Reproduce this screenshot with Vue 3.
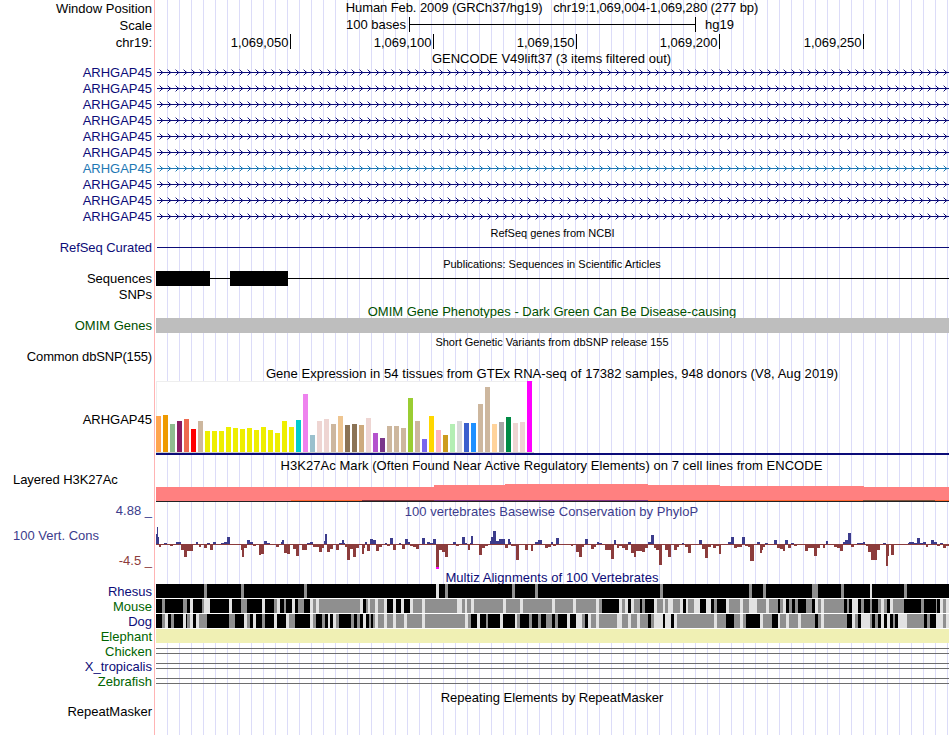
<script setup>
const WIDTH = 793

// ruler
const ticks = [
  { x: 134, label: '1,069,050' },
  { x: 277, label: '1,069,100' },
  { x: 420, label: '1,069,150' },
  { x: 563, label: '1,069,200' },
  { x: 707, label: '1,069,250' },
]

// GENCODE transcripts, the 7th is a non-coding one
const genes = Array.from({ length: 10 }, (_, i) => ({ name: 'ARHGAP45', alt: i === 6 }))

// GTEx: height and color of each tissue
const tissues = `36 ffa54f,37 ee9a00,28 8fbc8f,31 8b1c62,33 ee6a50,23 ff0000,31 cdb79e,21 eeee00,21 eeee00,
21 eeee00,25 eeee00,24 eeee00,23 eeee00,24 eeee00,22 eeee00,25 eeee00,22 eeee00,19 eeee00,31 eeee00,25 eeee00,
32 00cdcd,58 ee82ee,17 9ac0cd,31 eed5d2,33 eed5d2,28 cdb79e,36 eec591,27 8b7355,28 8b7355,27 cdaa7d,34 eed5d2,
19 b452cd,14 7a378b,26 cdb79e,26 cdb79e,24 cdb79e,54 9acd32,31 cdb79e,13 7a67ee,36 ffd700,22 ffb6c1,17 cd9b1d,
28 b4eeb4,31 d9d9d9,29 3a5fcd,29 1e90ff,48 cdb79e,65 cdb79e,28 ffd39b,30 a6a6a6,35 008b45,29 eed5d2,30 eed5d2,
71 ff00ff`
  .split(',')
  .map((s, i) => {
    const [h, color] = s.trim().split(' ')
    return { x: i * 7, h: Number(h), color: '#' + color }
  })

// H3K27Ac signal steps and the thin overlay at the bottom
const signal = [
  [0, 278, 14], [278, 349, 16], [349, 492, 17], [492, 564, 16], [564, 708, 15], [708, 793, 14],
]
const overlay = [
  [135, 206, '#ff6633'], [206, 278, '#803038'], [278, 492, '#803080'],
  [492, 707, '#ff6633'], [707, 779, '#805038'], [779, 793, '#ff6633'],
]

// PhyloP: "start end height", negative goes below the axis
const cons = `0 1 10,1 2 17,2 3 7,3 5 -3,8 11 1,14 17 -2,20 25 2,25 28 -6,28 31 -13,31 37 -7,40 42 2,43 45 -3,
48 51 -4,51 54 1,54 57 -6,57 60 2,65 68 1,68 71 2,71 74 7,85 86 -6,86 88 -13,88 91 -4,91 94 4,94 97 2,97 100 -2,
103 105 -11,105 108 -10,108 111 3,111 114 1,120 123 -3,125 126 2,126 128 4,128 131 -9,131 134 -10,137 140 -5,
140 143 -12,146 151 -6,151 154 1,154 157 2,157 163 -3,163 166 -8,166 168 -4,168 169 3,169 171 10,171 174 -8,
174 177 -5,180 183 -6,183 186 1,186 188 4,188 189 1,189 191 -3,191 194 -16,194 197 -5,197 200 -13,200 203 -4,
206 208 -10,208 209 -4,209 211 2,211 214 -7,214 217 5,217 220 4,220 223 -7,223 226 -3,229 231 1,231 234 -2,
234 237 6,237 240 -6,243 245 1,246 249 -5,249 252 5,252 254 2,254 257 -2,257 260 -3,260 263 -5,266 269 6,
271 274 2,274 277 1,277 280 5,280 283 -25,283 286 -6,286 289 -8,289 292 -13,297 300 2,300 303 -2,306 309 7,
309 311 1,312 314 -6,314 315 1,315 317 8,323 326 -11,326 329 -4,329 332 -2,334 335 3,335 337 7,337 340 13,
340 343 3,343 349 5,349 352 -4,352 354 5,354 355 2,355 360 -2,360 363 -16,369 372 -6,375 377 -7,379 382 2,
382 386 4,389 392 -4,392 395 -3,395 397 2,397 400 -2,400 403 6,415 417 -2,420 423 -8,423 426 -13,426 428 -3,
429 432 5,435 438 -5,438 440 -3,441 443 2,443 446 1,449 455 -6,455 458 -15,458 460 4,461 463 -4,463 466 -2,
466 469 -4,469 472 -6,472 475 2,475 478 -9,478 480 -13,480 486 -7,486 489 -8,489 492 -4,492 495 2,495 498 9,
498 500 -4,500 503 -6,503 506 -21,509 512 -6,512 515 -13,518 521 -6,521 523 -3,526 528 1,529 532 -3,532 535 -9,
543 546 4,546 549 -5,549 552 -14,552 555 -3,557 560 -4,560 563 -2,563 565 -10,572 575 2,575 578 7,578 581 -4,
581 586 -3,586 589 7,589 592 -2,592 594 -3,594 598 -17,601 604 2,604 606 -9,606 607 -6,607 609 -3,609 612 1,
618 621 4,621 624 -4,624 627 -5,627 629 -7,629 632 4,632 635 -4,635 638 1,638 641 -2,649 652 -7,652 658 -4,
658 661 -12,661 664 -4,667 669 -4,670 672 3,678 681 -3,681 684 -4,684 687 -7,687 689 2,689 692 4,692 695 11,
695 698 -3,701 707 1,707 709 2,710 712 -2,712 715 -8,715 721 -16,721 724 -6,727 730 1,730 732 -22,732 733 -12,
735 738 -11,752 753 1,753 758 2,758 761 1,761 764 6,764 767 1,767 770 2,770 772 -3,772 775 -1,775 778 4,
778 781 2,781 784 -2,784 787 1,787 790 -4,790 793 -2`
  .split(',')
  .map((s) => s.trim().split(' ').map(Number))

// Multiz: letter is the shade, number is where it starts (k black, g gray, w light)
const shades = { k: '#000', g: '#8f8f8f', w: '#e2e2e2' }
const toRuns = (s) => {
  const parts = s.trim().split(/\s+/)
  return parts.map((p, i) => {
    const x = Number(p.slice(1))
    const end = i + 1 < parts.length ? Number(parts[i + 1].slice(1)) : WIDTH
    return { x, w: end - x, fill: shades[p[0]] }
  })
}
const aligned = [
  {
    name: 'Rhesus',
    color: 'navy',
    runs: toRuns(`k0 g48 k51 g85 k88 g148 k151 w280 k283 g289 k292 g356 k359 g379 k382 g504 k507 g593 k596 g607
      k610 g656 k662 g685 k688 w714 k716 g748 k751`),
  },
  {
    name: 'Mouse',
    color: 'green',
    runs: toRuns(`k0 g6 k9 g27 k31 w34 k37 g46 w48 k54 w73 k76 g85 k91 w106 k109 g118 w121 k124 g128 k130 w136
      k139 g142 k148 w154 g157 w160 g163 w204 k207 g210 w212 g214 w219 g222 w228 k231 w237 k240 w245 k248 w254
      g257 w266 g269 w301 g306 w309 g311 w315 g318 w347 g350 w364 g367 w396 g399 w417 g420 w440 g443 k446 w463
      g466 w469 k472 w475 g478 k484 g486 k489 w498 g501 w507 g509 w512 g517 w524 k527 w530 g532 w538 k544 w550
      k555 g558 k561 w570 g573 w584 g587 w593 g601 w610 g613 k622 g624 w627 k630 g633 k636 g639 k642 g650 k656
      w659 g662 w665 g668 k688 g691 k693 w696 k702 g705 k708 g714 k716 g722 w725 g728 k731 w734 g737 k748 g765
      k768 g780 k781 w784 g787 w790`),
  },
  {
    name: 'Dog',
    color: 'navy',
    runs: toRuns(`k0 g6 w9 k12 g15 k18 w27 k30 g31 w34 k37 w40 g43 k51 g73 k79 w88 g91 k94 w97 k100 g106 k109
      w118 k121 w130 g133 k139 w154 g157 k160 g166 k169 w172 k174 w177 g180 k183 g195 k198 g201 k204 w207 k210
      g213 k215 g217 w219 g222 w228 g231 w237 g240 w248 g251 w266 g269 w309 g312 k315 w321 k324 g330 k332 w344
      k347 w359 g361 k364 g373 k376 g382 k385 g390 k396 g399 k402 w411 k414 w420 g426 k429 w432 g435 w440 g443
      w461 g466 w472 g475 w481 g484 k492 g495 w498 k507 w509 k515 w518 g521 w558 g561 k570 g578 w584 g587 k590
      w604 g607 k616 w622 g624 w630 g633 w642 g645 k659 g662 w665 g668 k691 w696 g699 k702 w705 g714 k716 g719
      k722 w725 k728 w731 k734 g737 k739 w742 g751 k768 g771 k774 w780 g787 w790`),
  },
]
const unaligned = [
  { name: 'Chicken', color: 'green' },
  { name: 'X_tropicalis', color: 'navy' },
  { name: 'Zebrafish', color: 'green' },
]
</script>

<template>
  <div class="browser">
    <div class="row head">
      <span class="label">Window Position</span>
      <div class="title position">Human Feb. 2009 (GRCh37/hg19) &nbsp; chr19:1,069,004-1,069,280 (277 bp)</div>
    </div>
    <div class="row head">
      <span class="label">Scale</span>
      <svg class="plot" width="793" height="17">
        <text x="250" y="12" text-anchor="end">100 bases</text>
        <path d="M253 0h1v15h-1zM254 7h285v1h-285zM539 0h1v15h-1z" />
        <text x="549" y="12">hg19</text>
      </svg>
    </div>
    <div class="row head">
      <span class="label">chr19:</span>
      <svg class="plot" width="793" height="17">
        <g v-for="t in ticks" :key="t.x">
          <text :x="t.x - 1.5" y="13" text-anchor="end">{{ t.label }}</text>
          <rect :x="t.x" y="0" width="1" height="15" />
        </g>
      </svg>
    </div>

    <div class="title gencode">GENCODE V49lift37 (3 items filtered out)</div>
    <div v-for="(g, i) in genes" :key="i" class="row" :class="g.alt ? 'blue' : 'navy'">
      <span class="label">{{ g.name }}</span>
      <svg class="plot" width="793" height="16">
        <defs>
          <pattern :id="'arrow' + i" x="3" y="0" width="8" height="16" patternUnits="userSpaceOnUse">
            <path d="M0 4h1v1h-1zM0 10h1v1h-1z" opacity="0.4" />
            <path d="M1 5h1v1h-1zM2 6h1v1h-1zM2 8h1v1h-1zM1 9h1v1h-1z" />
            <path d="M3 6h1v1h-1zM3 8h1v1h-1z" opacity="0.25" />
          </pattern>
        </defs>
        <rect x="1" y="7" width="792" height="1" />
        <rect x="1" y="0" width="792" height="16" :fill="`url(#arrow${i})`" />
      </svg>
    </div>

    <div class="title small refseq">RefSeq genes from NCBI</div>
    <div class="row navy">
      <span class="label refseq-label">RefSeq Curated</span>
      <svg class="plot" width="793" height="16"><rect x="1" y="7" width="792" height="1" /></svg>
    </div>

    <div class="title small pubs">Publications: Sequences in Scientific Articles</div>
    <div class="row">
      <span class="label">Sequences</span>
      <svg class="plot" width="793" height="16">
        <path d="M0 0h54v15h-54zM74 0h58v15h-58zM54 7h739v1h-739z" />
      </svg>
    </div>
    <div class="row"><span class="label">SNPs</span></div>

    <div class="title omim">OMIM Gene Phenotypes - Dark Green Can Be Disease-causing</div>
    <div class="row omim-row">
      <span class="label">OMIM Genes</span>
      <div class="gray-bar"></div>
    </div>

    <div class="title small dbsnp">Short Genetic Variants from dbSNP release 155</div>
    <div class="row"><span class="label dbsnp-label">Common dbSNP(155)</span></div>

    <div class="title gtex">Gene Expression in 54 tissues from GTEx RNA-seq of 17382 samples, 948 donors (V8, Aug 2019)</div>
    <div class="row gtex-row">
      <span class="label">ARHGAP45</span>
      <svg class="plot" width="793" height="74">
        <rect width="377" height="72" fill="#fff" />
        <path d="M0 0h377v1h-377zM0 0h1v72h-1z" fill="#eee" />
        <rect y="71" width="378" height="1" fill="#ccc" />
        <rect
          v-for="t in tissues"
          :key="t.x"
          :x="t.x"
          :y="71 - t.h"
          width="5"
          :height="t.h"
          :fill="t.color"
        />
        <rect y="72" width="793" height="2" fill="#0c0c78" />
      </svg>
    </div>

    <div class="title h3k">H3K27Ac Mark (Often Found Near Active Regulatory Elements) on 7 cell lines from ENCODE</div>
    <div class="row h3k-row">
      <span class="label left">Layered H3K27Ac</span>
      <svg class="plot" width="793" height="29">
        <rect v-for="s in signal" :key="s[0]" :x="s[0]" :y="28 - s[2]" :width="s[1] - s[0]" :height="s[2]" fill="#ff8080" />
        <rect v-for="s in overlay" :key="s[0]" :x="s[0]" y="27" :width="s[1] - s[0]" height="1" :fill="s[2]" />
        <rect y="28" width="793" height="1" fill="#222" />
      </svg>
    </div>

    <div class="row cons-row">
      <div class="label cons-label">
        <span class="up">4.88 _</span>
        <span class="name">100 Vert. Cons</span>
        <span class="down">-4.5 _</span>
      </div>
      <div class="cons-data">
        <div class="title up">100 vertebrates Basewise Conservation by PhyloP</div>
        <svg class="plot" width="793" height="52">
          <rect y="25" width="793" height="1" fill="#8c3c3c" />
          <rect
            v-for="c in cons"
            :key="c[0]"
            :x="c[0]"
            :y="c[2] > 0 ? 25 - c[2] : 25"
            :width="c[1] - c[0]"
            :height="Math.abs(c[2])"
            :fill="c[2] > 0 ? '#3c3c8c' : '#8c3c3c'"
          />
          <rect x="280" y="48" width="3" height="2" fill="#f0f" />
        </svg>
        <div class="title navy multiz">Multiz Alignments of 100 Vertebrates</div>
      </div>
    </div>

    <div v-for="a in aligned" :key="a.name" class="row species" :class="a.color">
      <span class="label">{{ a.name }}</span>
      <svg class="plot" width="793" height="15">
        <rect y="14" width="793" height="1" fill="#fff" />
        <rect v-for="r in a.runs" :key="r.x" :x="r.x" y="0" :width="r.w" height="14" :fill="r.fill" />
      </svg>
    </div>
    <div class="row species green">
      <span class="label">Elephant</span>
      <div class="yellow-bar"></div>
    </div>
    <div v-for="u in unaligned" :key="u.name" class="row species" :class="u.color">
      <span class="label">{{ u.name }}</span>
      <svg class="plot" width="793" height="15">
        <path d="M0 4h793v1h-793zM0 9h793v1h-793z" fill="#6e6e6e" />
      </svg>
    </div>

    <div class="title repeats">Repeating Elements by RepeatMasker</div>
    <div class="row"><span class="label">RepeatMasker</span></div>
  </div>
</template>

<style>
body {
  margin: 0;
  background: #fff;
}
</style>

<style scoped>
.browser {
  width: 949px;
  height: 735px;
  overflow: hidden;
  font-family: 'Liberation Sans', Arial, sans-serif;
  font-size: 13px;
  color: #000;
  /* red edge of the labels, then a guide line every 12px */
  background:
    linear-gradient(#ffb4b4, #ffb4b4) 154px 0 / 1px 100% no-repeat,
    repeating-linear-gradient(to right, transparent 0 11px, #dcdcf8 11px 12px) 156px 0 / 793px 100% no-repeat;
}

.row {
  display: flex;
  height: 16px;
  line-height: 16px;
}

.head {
  height: 17px;
  line-height: 17px;
}

.label {
  flex: none;
  width: 152px;
  margin-right: 4px;
  text-align: right;
  white-space: nowrap;
}

.label.left {
  width: 139px;
  padding-left: 13px;
  text-align: left;
  letter-spacing: -0.05px;
}

.refseq-label {
  letter-spacing: -0.07px;
}

.dbsnp-label {
  letter-spacing: -0.16px;
}

.plot {
  display: block;
  flex: none;
  overflow: visible;
  fill: currentColor;
  shape-rendering: crispEdges;
}

.title {
  width: 792px;
  height: 15px;
  margin-left: 156px;
  line-height: 15px;
  text-align: center;
  white-space: nowrap;
}

.row .title {
  margin-left: 0;
}

.small {
  font-size: 11px;
}

.position {
  height: 17px;
  letter-spacing: -0.09px;
}

.gencode {
  width: 791px;
  height: 14px;
  letter-spacing: 0.02px;
}

.refseq {
  width: 793px;
  height: 15px;
  line-height: 17px;
}

.pubs {
  height: 14px;
  margin-top: 1px;
}

.omim {
  height: 15px;
  line-height: 17px;
  color: #005000;
}

.omim-row {
  color: #005000;
}

.gray-bar {
  width: 793px;
  height: 15px;
  background: #bebebe;
}

.dbsnp {
  height: 15px;
  line-height: 16px;
}

.gtex {
  height: 15px;
  margin-top: 1px;
  letter-spacing: 0.055px;
}

.gtex-row {
  height: 74px;
  line-height: 77px;
}

.h3k {
  width: 791px;
  margin-top: 3px;
  letter-spacing: 0.05px;
}

.h3k-row {
  height: 29px;
  line-height: 13px;
}

.cons-row {
  height: 82px;
}

.cons-label {
  display: flex;
  flex-direction: column;
  justify-content: space-between;
  height: 66px;
  padding-top: 1px;
}

.cons-label .name {
  padding-left: 13px;
  text-align: left;
  color: #3c3c8c;
}

.up {
  color: #3c3c8c;
}

.down {
  color: #8c3c3c;
}

.cons-data .title {
  width: 791px;
  height: 17px;
  line-height: 19px;
  letter-spacing: 0.03px;
}

.cons-data .multiz {
  width: 792px;
  height: 13px;
  line-height: 14px;
  letter-spacing: 0.06px;
}

.species {
  height: 15px;
  line-height: 15px;
}

.yellow-bar {
  width: 793px;
  height: 14px;
  background: #f0f0b4;
}

.repeats {
  margin-top: 1px;
  height: 14px;
}

.navy {
  color: #0c0c78;
}

.blue {
  color: #1e78b4;
}

.green {
  color: #006400;
}
</style>
